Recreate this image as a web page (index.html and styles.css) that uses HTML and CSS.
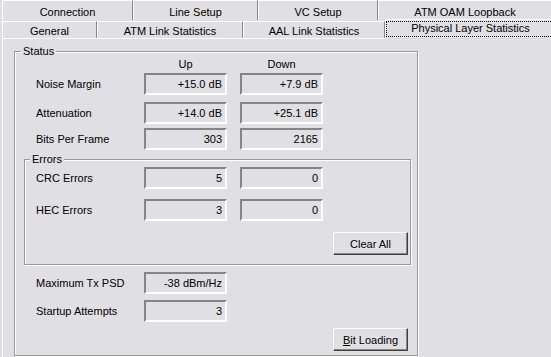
FILE: index.html
```html
<!DOCTYPE html>
<html lang="en">

<head>
    <meta charset="UTF-8">
    <title>Physical Layer Statistics</title>
    <link rel="stylesheet" href="styles.css">
</head>

<body>
    <div class="dialog">
        <div class="tabs">
            <div class="tab-row back">
                <div class="tab" style="width: 131px">Connection</div>
                <div class="tab" style="width: 125px">Line Setup</div>
                <div class="tab" style="width: 120px">VC Setup</div>
                <div class="tab grow">ATM OAM Loopback</div>
            </div>
            <div class="tab-row front">
                <div class="tab" style="width: 95px">General</div>
                <div class="tab" style="width: 146px">ATM Link Statistics</div>
                <div class="tab" style="width: 142px">AAL Link Statistics</div>
                <div class="tab selected"><span class="focus">Physical Layer Statistics</span></div>
            </div>
        </div>

        <div class="panel">
            <div class="group status">
                <span class="caption">Status</span>

                <div class="head">
                    <span></span>
                    <span>Up</span>
                    <span>Down</span>
                </div>

                <div class="row noise">
                    <span>Noise Margin</span>
                    <div class="field">+15.0 dB</div>
                    <div class="field">+7.9 dB</div>
                </div>
                <div class="row atten">
                    <span>Attenuation</span>
                    <div class="field">+14.0 dB</div>
                    <div class="field">+25.1 dB</div>
                </div>
                <div class="row bits">
                    <span>Bits Per Frame</span>
                    <div class="field">303</div>
                    <div class="field">2165</div>
                </div>

                <div class="group errors">
                    <span class="caption">Errors</span>
                    <div class="row crc">
                        <span>CRC Errors</span>
                        <div class="field">5</div>
                        <div class="field">0</div>
                    </div>
                    <div class="row hec">
                        <span>HEC Errors</span>
                        <div class="field">3</div>
                        <div class="field">0</div>
                    </div>
                    <div class="actions">
                        <button>Clear All</button>
                    </div>
                </div>

                <div class="row psd">
                    <span>Maximum Tx PSD</span>
                    <div class="field">-38 dBm/Hz</div>
                </div>
                <div class="row startup">
                    <span>Startup Attempts</span>
                    <div class="field">3</div>
                </div>

                <div class="actions">
                    <button><u>B</u>it Loading</button>
                </div>
            </div>
        </div>
    </div>
</body>

</html>
```

FILE: styles.css
```css
body {
    margin: 0;
    background-color: #e0dfe3;
    font-family: "Liberation Sans", Arial, sans-serif;
    font-size: 11px;
    color: #000;
}

.dialog {
    width: 551px;
    height: 357px;
    overflow: hidden;
}

/* tabs */

.tabs {
    height: 38px;
    padding-left: 2px;
}

.tab-row {
    display: flex;
}

.tab-row.back {
    height: 20px;
}

.tab-row.front {
    height: 18px;
    align-items: flex-end;
}

.tab {
    box-sizing: border-box;
    flex-shrink: 0;
    display: flex;
    align-items: center;
    justify-content: center;
    white-space: nowrap;
    border-top: 1px solid #fff;
    border-left: 1px solid #fff;
    border-right: 1px solid #858585;
}

.back .tab {
    height: 20px;
    padding-top: 2px;
}

.front .tab {
    height: 17px;
    padding-top: 1px;
}

.tab.grow {
    flex: 1;
    border-right: none;
}

.front .tab.selected {
    position: relative;
    width: 170px;
    height: 20px;
    margin-bottom: -1px;
    padding-top: 0;
    align-items: flex-start;
    background-color: #e0dfe3;
    border-right: none;
}

.focus {
    flex: 1;
    box-sizing: border-box;
    height: 16px;
    margin-top: 1px;
    border: 1px dotted #000;
    text-align: center;
    line-height: 13px;
}

/* page body */

.panel {
    box-sizing: border-box;
    height: 319px;
    margin-left: 2px;
    padding: 12px 0 0 11px;
    border-top: 1px solid #fff;
    border-left: 1px solid #fff;
}

.group {
    position: relative;
    box-sizing: border-box;
    border: 1px solid #9a9a9e;
    box-shadow: 1px 1px 0 #fff, inset 1px 1px 0 #fff;
}

.caption {
    position: absolute;
    top: -7px;
    left: 6px;
    padding: 0 2px;
    line-height: 13px;
    background-color: #e0dfe3;
}

.status {
    width: 404px;
    height: 305px;
}

.errors {
    width: 387px;
    height: 106px;
    margin: 9px 0 0 9px;
}

.errors .caption {
    left: 5px;
}

.head,
.row {
    display: grid;
    grid-template-columns: 95px 83px 83px;
    column-gap: 13px;
    padding-left: 21px;
}

.head {
    margin-top: 6px;
    line-height: 13px;
    text-align: center;
}

.row {
    height: 22px;
    align-items: center;
}

.errors .row {
    padding-left: 11px;
}

.noise { margin-top: 2px; }
.atten { margin-top: 7px; }
.bits { margin-top: 4px; }
.crc { margin-top: 7px; }
.hec { margin-top: 10px; }
.psd { margin-top: 7px; }
.startup { margin-top: 6px; }

.field {
    box-sizing: border-box;
    height: 22px;
    padding-right: 3px;
    border: 2px solid;
    border-color: #858585 #fff #fff #858585;
    text-align: right;
    line-height: 18px;
}

.actions {
    display: flex;
    justify-content: flex-end;
    margin-top: 6px;
    padding-right: 9px;
}

.errors .actions {
    margin-top: 11px;
    padding-right: 2px;
}

button {
    box-sizing: border-box;
    width: 75px;
    height: 23px;
    padding: 0;
    font: inherit;
    color: #000;
    background-color: #e0dfe3;
    border: 1px solid;
    border-color: #fff #404040 #404040 #fff;
    box-shadow: inset -1px -1px 0 #858585;
}
```
